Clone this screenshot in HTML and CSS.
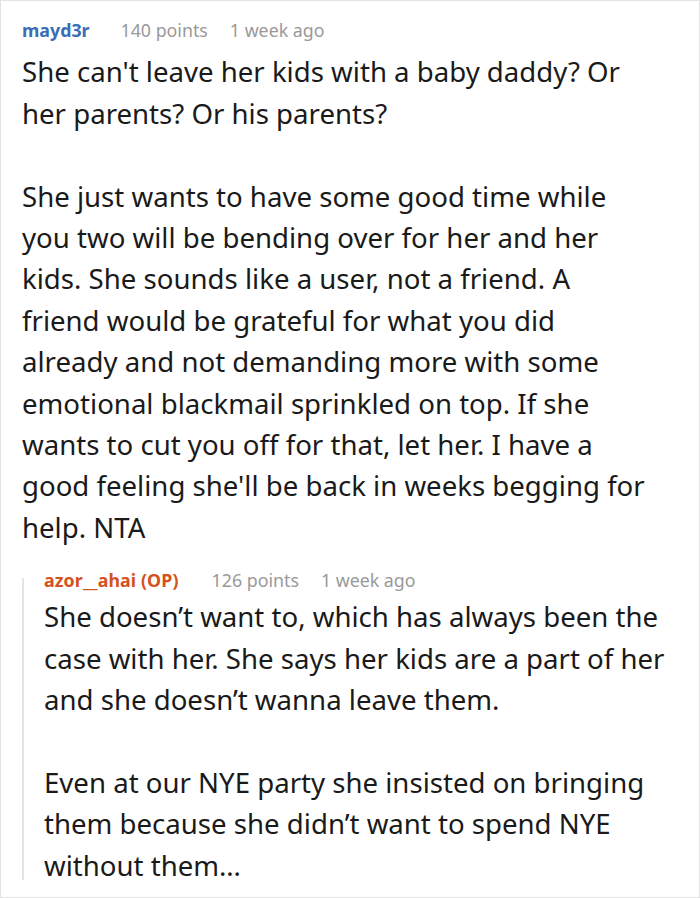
FILE: index.html
```html
<!DOCTYPE html>
<html>
<head>
<meta charset="utf-8">
<link rel="stylesheet" href="styles.css">
</head>
<body>
<div class="thread">
  <div class="comment">
    <div class="meta">
      <span class="author">mayd3r</span>
      <span class="points">140 points</span>
      <span class="time">1 week ago</span>
    </div>
    <div class="text main-text">
      <p>She can't leave her kids with a baby daddy? Or her parents? Or his parents?</p>
      <p>She just wants to have some good time while you two will be bending over for her and her kids. She sounds like a user, not a friend. A friend would be grateful for what you did already and not demanding more with some emotional blackmail sprinkled on top. If she wants to cut you off for that, let her. I have a good feeling she'll be back in weeks begging for help. NTA</p>
    </div>
    <div class="reply">
      <div class="meta">
        <span class="author op">azor__ahai (OP)</span>
        <span class="points">126 points</span>
        <span class="time">1 week ago</span>
      </div>
      <div class="text">
        <p>She doesn’t want to, which has always been the case with her. She says her kids are a part of her and she doesn’t wanna leave them.</p>
        <p>Even at our NYE party she insisted on bringing them because she didn’t want to spend NYE without them…</p>
      </div>
    </div>
  </div>
</div>
</body>
</html>
```
FILE: styles.css
```css
html, body {
  margin: 0;
  padding: 0;
  background: #fff;
}
.thread {
  box-sizing: border-box;
  width: 700px;
  height: 898px;
  border: 1px solid #e3e3e3;
  overflow: hidden;
  font-family: "Noto Sans", "Open Sans", sans-serif;
}
.comment {
  padding: 17px 26px 0 21px;
}
.meta {
  font-size: 17.8px;
  line-height: 24px;
  display: flex;
}
.author {
  font-weight: bold;
  color: #3a6db5;
  margin-right: 31px;
}
.author.op {
  color: #d4521d;
  margin-right: 33px;
  letter-spacing: 0.1px;
}
.points {
  color: #999;
  margin-right: 22px;
}
.time {
  color: #999;
}
.text {
  font-size: 27.6px;
  line-height: 41.4px;
  color: #1a1a1a;
  margin-top: 9.3px;
}
.main-text {
  margin-right: 19px;
}
.text p {
  margin: 0 0 41.4px 0;
}
.text p:last-child {
  margin-bottom: 0;
}
.reply {
  position: relative;
  margin-top: 20px;
  padding-left: 22px;
}
.reply::before {
  content: "";
  position: absolute;
  left: 0;
  top: 10px;
  bottom: 6px;
  width: 2px;
  background: #e4e4e4;
}
.reply .text {
  margin-top: 4.3px;
}
```
